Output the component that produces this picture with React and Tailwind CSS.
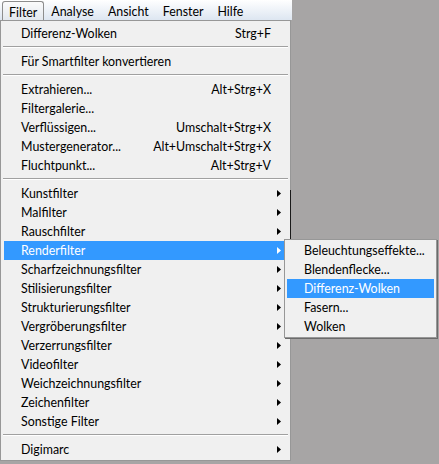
import React from 'react';

const groups = [
  [{ label: 'Differenz-Wolken', key: 'Strg+F' }],
  [{ label: 'Für Smartfilter konvertieren' }],
  [
    { label: 'Extrahieren...', key: 'Alt+Strg+X' },
    { label: 'Filtergalerie...' },
    { label: 'Verflüssigen...', key: 'Umschalt+Strg+X' },
    { label: 'Mustergenerator...', key: 'Alt+Umschalt+Strg+X' },
    { label: 'Fluchtpunkt...', key: 'Alt+Strg+V' },
  ],
  [
    { label: 'Kunstfilter', sub: true },
    { label: 'Malfilter', sub: true },
    { label: 'Rauschfilter', sub: true },
    { label: 'Renderfilter', sub: true, active: true },
    { label: 'Scharfzeichnungsfilter', sub: true },
    { label: 'Stilisierungsfilter', sub: true },
    { label: 'Strukturierungsfilter', sub: true },
    { label: 'Vergröberungsfilter', sub: true },
    { label: 'Verzerrungsfilter', sub: true },
    { label: 'Videofilter', sub: true },
    { label: 'Weichzeichnungsfilter', sub: true },
    { label: 'Zeichenfilter', sub: true },
    { label: 'Sonstige Filter', sub: true },
  ],
  [{ label: 'Digimarc', sub: true }],
];

const renderItems = ['Beleuchtungseffekte...', 'Blendenflecke...', 'Differenz-Wolken', 'Fasern...', 'Wolken'];

function Arrow({ white }) {
  return (
    <svg width="4" height="7" viewBox="0 0 4 7" className="absolute right-[6px] top-[6px]">
      <path d="M0 0 L4 3.5 L0 7 Z" fill={white ? '#ffffff' : '#000000'} />
    </svg>
  );
}

function Row({ item }) {
  return (
    <div
      className={`relative mx-[3px] h-[19px] pt-[2px] flex items-center justify-between pl-[17px] pr-[16px] ${
        item.active ? 'bg-[#3399ff] text-white' : 'text-black'
      }`}
    >
      <span>{item.label}</span>
      {item.key && <span>{item.key}</span>}
      {item.sub && <Arrow white={item.active} />}
    </div>
  );
}

function Separator() {
  return (
    <div className="h-[9px] pt-[3px] px-[2px]">
      <div className="h-px bg-[#a0a0a0]" />
      <div className="h-px bg-white" />
    </div>
  );
}

export default function App() {
  return (
    <div
      className="relative w-[439px] h-[464px] bg-[#a7a5a5] overflow-hidden text-[12.4px] leading-none"
      style={{ fontFamily: 'Lato, "Noto Sans", sans-serif' }}
    >
      {/* menu bar */}
      <div className="w-[292px] h-[20px] flex items-stretch pl-[2px] bg-gradient-to-b from-[#ffffff] to-[#dde6f1]">
        {['Filter', 'Analyse', 'Ansicht', 'Fenster', 'Hilfe'].map((m, i) => (
          <div
            key={m}
            className={`mt-[1px] pt-[4px] px-[6px] flex items-center border rounded-t-[3px] ${
              i === 0 ? 'border-[#8d8d8d] border-b-0 bg-gradient-to-b from-[#fbfbfb] to-[#e3e8ee]' : 'border-transparent'
            }`}
          >
            {m}
          </div>
        ))}
      </div>

      {/* dropdown */}
      <div className="w-[291px] bg-[#f0f0f0] border border-[#979797] pt-[3px] pb-[1px]">
        {groups.map((g, gi) => (
          <React.Fragment key={gi}>
            {gi > 0 && <Separator />}
            {g.map((item) => (
              <Row key={item.label} item={item} />
            ))}
          </React.Fragment>
        ))}
      </div>

      {/* edge of the window behind */}
      <div className="absolute left-[290px] top-[190px] w-px h-[50px] bg-[#1a1a1a]" />

      {/* submenu */}
      <div className="absolute left-[284px] top-[239px] w-[153px] bg-[#f0f0f0] border border-[#979797] py-[1px] shadow-[1px_1px_0_#6b6b6b]">
        {renderItems.map((r, i) => (
          <div
            key={r}
            className={`mx-[2px] h-[19px] pt-[2px] flex items-center pl-[17px] ${
              i === 2 ? 'bg-[#3399ff] text-white' : 'text-black'
            }`}
          >
            {r}
          </div>
        ))}
      </div>
    </div>
  );
}
